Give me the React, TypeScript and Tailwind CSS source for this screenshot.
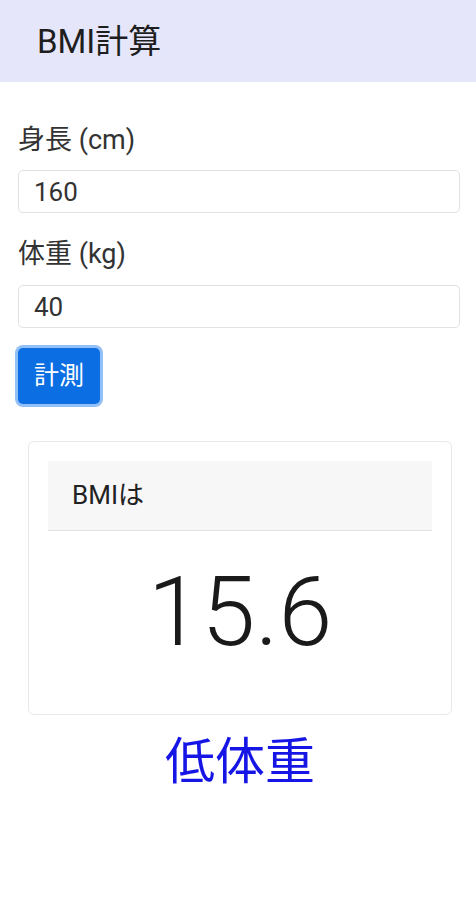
import React, { useState } from 'react';

const font = { fontFamily: "Roboto, 'Noto Sans CJK JP', sans-serif" };

export default function App() {
  const [height, setHeight] = useState('160');
  const [weight, setWeight] = useState('40');

  return (
    <div className="min-h-[900px] bg-white text-[#212529]" style={font}>
      <header className="flex h-[82px] items-center bg-[#e6e6fa] pl-[37px]">
        <h1 className="text-[33px] font-normal leading-none text-[#1e1e1e]">BMI計算</h1>
      </header>

      <main className="pl-[18px] pr-[16px]">
        <label className="mt-[43px] block text-[27px] leading-[30px] text-[#333]">身長 (cm)</label>
        <input
          value={height}
          onChange={(e) => setHeight(e.target.value)}
          className="mt-[15px] block h-[43px] w-full rounded-[5px] border border-[#e2e2e2] px-[15px] text-[26px] text-[#333] outline-none"
        />

        <label className="mt-[26px] block text-[27px] leading-[30px] text-[#333]">体重 (kg)</label>
        <input
          value={weight}
          onChange={(e) => setWeight(e.target.value)}
          className="mt-[16px] block h-[43px] w-full rounded-[5px] border border-[#e2e2e2] px-[15px] text-[26px] text-[#333] outline-none"
        />

        <button className="mt-[20px] block h-[56px] w-[82px] rounded-[5px] bg-[#0b6fe3] text-[25px] text-white ring-[3px] ring-[#93bff7]">
          計測
        </button>

        <div className="mt-[37px] ml-[10px] mr-[8px] rounded-[6px] border border-[#e8e8e8] px-[19px] pt-[19px] pb-[20px]">
          <div className="flex h-[70px] items-center border-b border-[#e2e2e2] bg-[#f7f7f7] pl-[24px] text-[26px] text-[#222]">
            BMIは
          </div>
          <div className="flex h-[163px] items-center justify-center">
            <span className="text-[97px] font-light leading-none text-[#1a1a1a]">15.6</span>
          </div>
        </div>

        <p className="mt-[18px] ml-[10px] mr-[8px] text-center text-[50px] leading-[58px] text-[#1515e6]">低体重</p>
      </main>
    </div>
  );
}
